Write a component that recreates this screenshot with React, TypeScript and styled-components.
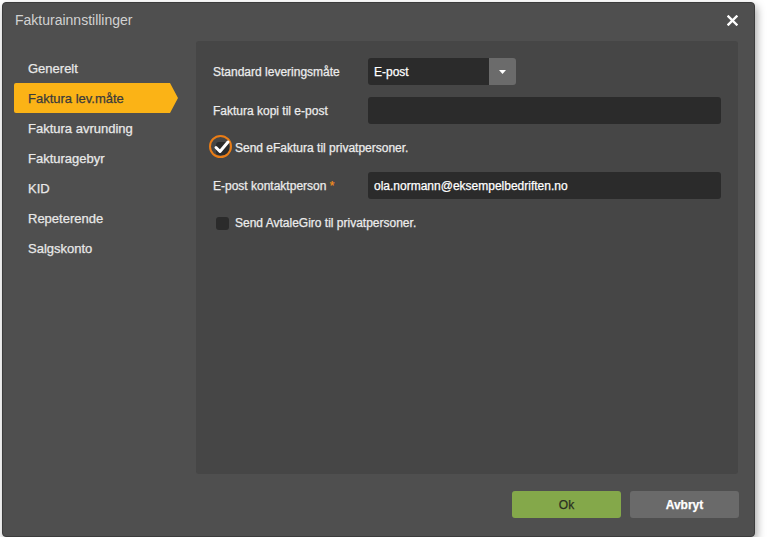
import { useState } from "react";
import styled, { createGlobalStyle } from "styled-components";

const GlobalStyle = createGlobalStyle`
  html, body {
    margin: 0;
    padding: 0;
    background: #ffffff;
  }
  body {
    font-family: "Liberation Sans", Arial, sans-serif;
  }
`;

export const Page = styled.div`
  padding: 2px 0 0 2px;
`;

export const Dialog = styled.div`
  width: 753px;
  height: 535px;
  box-sizing: border-box;
  background: #4f4f4f;
  border: 1px solid #3c3c3c;
  border-radius: 4px;
  box-shadow: 2px 4px 8px rgba(0, 0, 0, 0.35);
  display: flex;
  flex-direction: column;
  color: #e6e6e6;
  -webkit-text-stroke: 0.25px currentColor;
`;

export const Header = styled.div`
  height: 38px;
  box-sizing: border-box;
  display: flex;
  align-items: center;
  justify-content: space-between;
  padding: 0 16px 4px 12px;
`;

export const Title = styled.div`
  font-size: 14px;
  color: #d2d2d2;
  -webkit-text-stroke: 0;
`;

export const CloseButton = styled.button`
  background: none;
  border: none;
  padding: 0;
  color: #ffffff;
  cursor: pointer;
  display: flex;
`;

export const Body = styled.div`
  display: flex;
  height: 433px;
`;

export const Sidebar = styled.div`
  width: 193px;
  padding-top: 12px;
  display: flex;
  flex-direction: column;
`;

export const NavItem = styled.div<{ $active?: boolean }>`
  position: relative;
  height: 30px;
  width: 156px;
  box-sizing: border-box;
  margin-left: 11px;
  padding-left: 14px;
  display: flex;
  align-items: center;
  font-size: 13px;
  color: ${(p) => (p.$active ? "#3b3b3b" : "#e8e8e8")};
  background: ${(p) => (p.$active ? "#fbb316" : "transparent")};
  border-radius: 2px 0 0 2px;
  cursor: pointer;

  &::after {
    content: "";
    display: ${(p) => (p.$active ? "block" : "none")};
    position: absolute;
    right: -8px;
    top: 0;
    border-top: 15px solid transparent;
    border-bottom: 15px solid transparent;
    border-left: 8px solid #fbb316;
  }
`;

export const Panel = styled.div`
  width: 542px;
  background: #464646;
  border-radius: 3px;
  padding: 17px 17px 0 17px;
  box-sizing: border-box;
  display: flex;
  flex-direction: column;
`;

export const FormRow = styled.div<{ $mb?: number }>`
  display: flex;
  align-items: center;
  margin-bottom: ${(p) => p.$mb ?? 12}px;
`;

export const Label = styled.label`
  width: 155px;
  font-size: 12px;
  color: #ececec;
`;

export const Required = styled.span`
  color: #f08c1e;
`;

export const TextInput = styled.input`
  width: 353px;
  height: 27px;
  box-sizing: border-box;
  background: #2b2b2b;
  border: none;
  border-radius: 3px;
  padding: 0 6px;
  font-family: "Liberation Sans", Arial, sans-serif;
  font-size: 12px;
  color: #ffffff;
  outline: none;
  -webkit-text-stroke: 0.25px currentColor;
`;

export const SelectBox = styled.div`
  width: 148px;
  height: 27px;
  display: flex;
  border-radius: 3px;
  overflow: hidden;
`;

export const SelectValue = styled.div`
  flex: 1;
  background: #2b2b2b;
  display: flex;
  align-items: center;
  padding-left: 6px;
  font-size: 12px;
  color: #ffffff;
`;

export const SelectToggle = styled.div`
  width: 27px;
  background: #6b6b6b;
  display: flex;
  align-items: center;
  justify-content: center;
`;

export const CheckRow = styled.label<{ $mb?: number }>`
  display: flex;
  align-items: center;
  gap: 6px;
  padding-left: 3px;
  font-size: 12px;
  color: #ececec;
  cursor: pointer;
  margin-bottom: ${(p) => p.$mb ?? 12}px;
`;

export const CheckBox = styled.span<{ $checked?: boolean; $focus?: boolean }>`
  position: relative;
  width: 13px;
  height: 13px;
  background: #2b2b2b;
  border-radius: 3px;
  display: inline-block;

  &::before {
    content: "";
    display: ${(p) => (p.$focus ? "block" : "none")};
    position: absolute;
    left: -7px;
    top: -7px;
    width: 23px;
    height: 23px;
    box-sizing: border-box;
    border: 2.5px solid #ea7d16;
    border-radius: 50%;
  }

  svg {
    position: absolute;
    left: -3px;
    top: -4px;
  }
`;

export const Footer = styled.div`
  flex: 1;
  display: flex;
  justify-content: flex-end;
  align-items: flex-start;
  gap: 9px;
  padding: 17px 15px 0 0;
`;

export const Button = styled.button<{ $primary?: boolean }>`
  width: 109px;
  height: 27px;
  border: none;
  border-radius: 3px;
  font-family: "Liberation Sans", Arial, sans-serif;
  font-size: 12px;
  font-weight: ${(p) => (p.$primary ? "normal" : "bold")};
  color: ${(p) => (p.$primary ? "#2a2f22" : "#ffffff")};
  background: ${(p) => (p.$primary ? "#84a84a" : "#6a6a6a")};
  cursor: pointer;
`;

const navItems = [
  "Generelt",
  "Faktura lev.måte",
  "Faktura avrunding",
  "Fakturagebyr",
  "KID",
  "Repeterende",
  "Salgskonto",
];

const CheckMark = () => (
  <svg width="18" height="18" viewBox="0 0 18 18">
    <path
      d="M3 9.5 L7 13.5 L15 4"
      stroke="#ffffff"
      strokeWidth="3"
      fill="none"
      strokeLinecap="round"
      strokeLinejoin="round"
    />
  </svg>
);

function App() {
  const [active, setActive] = useState<number>(1);
  const [efaktura, setEfaktura] = useState<boolean>(true);
  const [avtalegiro, setAvtalegiro] = useState<boolean>(false);

  return (
    <>
      <GlobalStyle />
      <Page>
        <Dialog>
          <Header>
            <Title>Fakturainnstillinger</Title>
            <CloseButton>
              <svg width="11" height="11" viewBox="0 0 11 11">
                <path
                  d="M1.5 1.5 L9.5 9.5 M9.5 1.5 L1.5 9.5"
                  stroke="#ffffff"
                  strokeWidth="2.4"
                  strokeLinecap="square"
                />
              </svg>
            </CloseButton>
          </Header>
          <Body>
            <Sidebar>
              {navItems.map((item, i) => (
                <NavItem
                  key={item}
                  $active={i === active}
                  onClick={() => setActive(i)}
                >
                  {item}
                </NavItem>
              ))}
            </Sidebar>
            <Panel>
              <FormRow>
                <Label>Standard leveringsmåte</Label>
                <SelectBox>
                  <SelectValue>E-post</SelectValue>
                  <SelectToggle>
                    <svg width="7" height="4" viewBox="0 0 7 4">
                      <path d="M0 0 H7 L3.5 4 Z" fill="#ffffff" />
                    </svg>
                  </SelectToggle>
                </SelectBox>
              </FormRow>
              <FormRow $mb={17}>
                <Label>Faktura kopi til e-post</Label>
                <TextInput type="text" />
              </FormRow>
              <CheckRow $mb={17} onClick={() => setEfaktura(!efaktura)}>
                <CheckBox $checked={efaktura} $focus>
                  {efaktura && <CheckMark />}
                </CheckBox>
                Send eFaktura til privatpersoner.
              </CheckRow>
              <FormRow $mb={17}>
                <Label>
                  E-post kontaktperson <Required>*</Required>
                </Label>
                <TextInput
                  type="text"
                  defaultValue="ola.normann@eksempelbedriften.no"
                />
              </FormRow>
              <CheckRow onClick={() => setAvtalegiro(!avtalegiro)}>
                <CheckBox $checked={avtalegiro}>
                  {avtalegiro && <CheckMark />}
                </CheckBox>
                Send AvtaleGiro til privatpersoner.
              </CheckRow>
            </Panel>
          </Body>
          <Footer>
            <Button $primary>Ok</Button>
            <Button>Avbryt</Button>
          </Footer>
        </Dialog>
      </Page>
    </>
  );
}

export default App;
